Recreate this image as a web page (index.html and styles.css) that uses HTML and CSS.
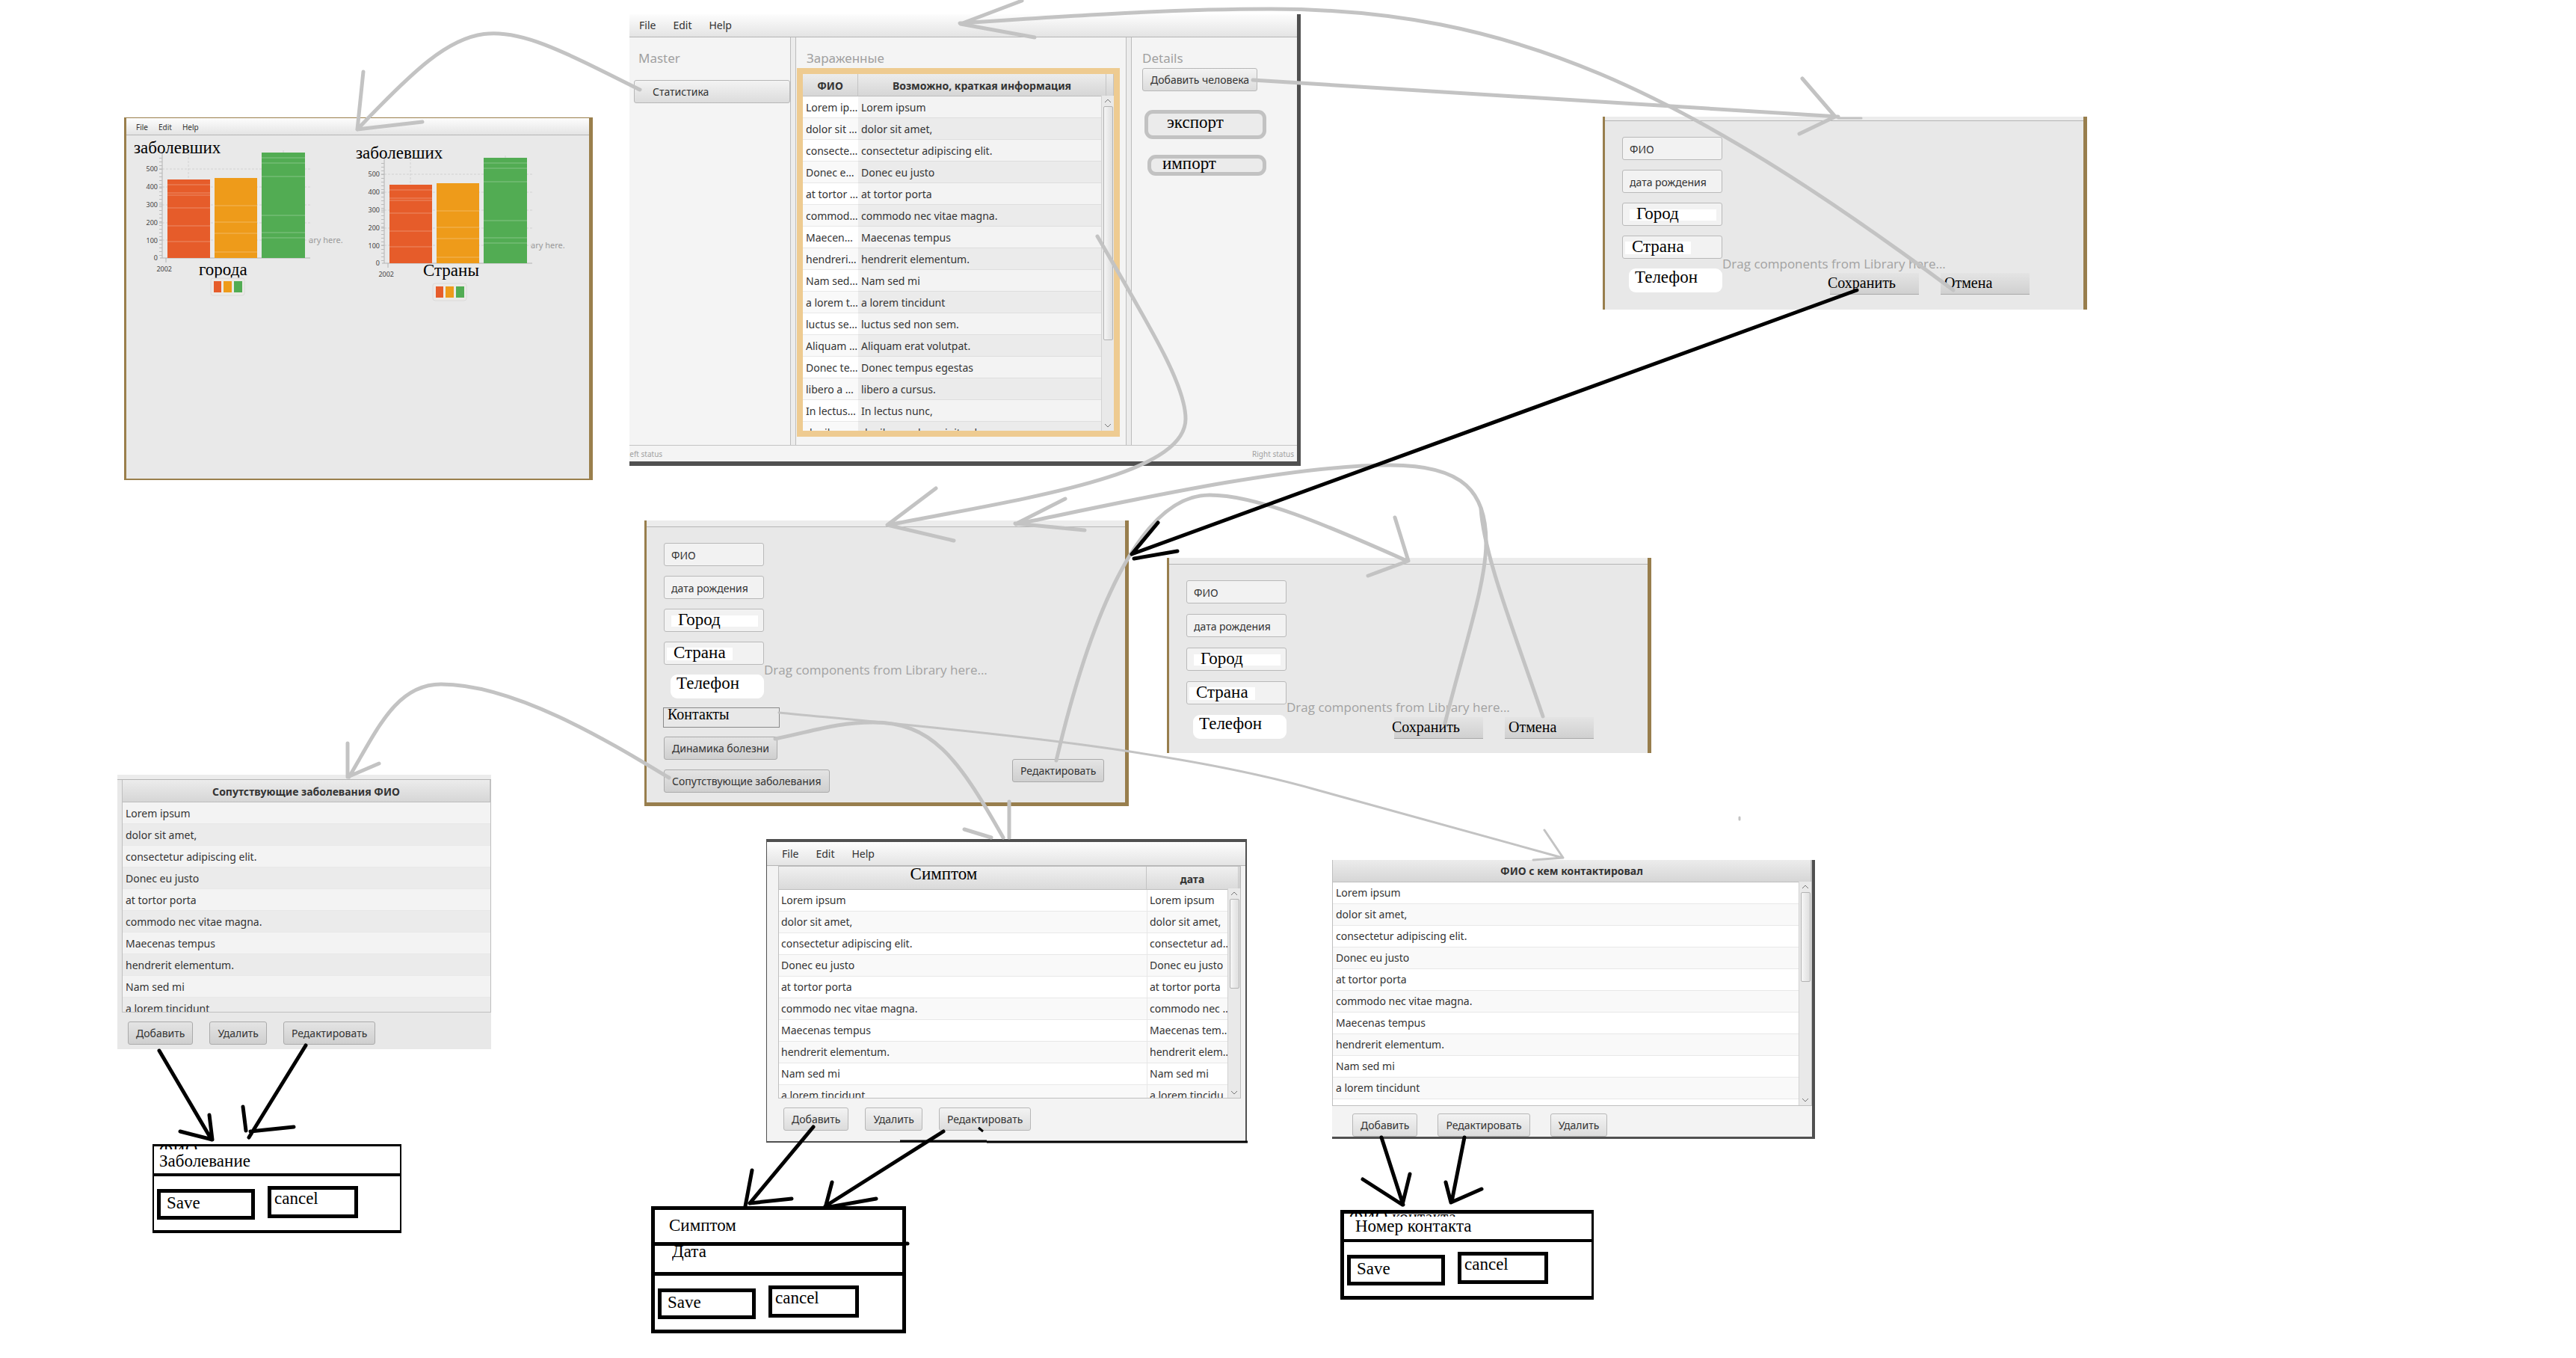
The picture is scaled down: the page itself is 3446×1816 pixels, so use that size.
FILE: index.html
```html
<!DOCTYPE html>
<html lang="ru">
<head>
<meta charset="utf-8">
<title>Схема экранов</title>
<link rel="stylesheet" href="styles.css">
</head>
<body>
<main class="board">

  <section class="window stats" aria-label="Статистика">
    <nav class="menubar small"><button>File</button><button>Edit</button><button>Help</button></nav>
    <div class="charts">
      <svg class="chart" viewBox="0 0 297 220" role="img" aria-label="Заболевшие, города">
        <path class="grid" d="M47 45H245M47 69H245M47 93H245M47 117H245M47 140H245M82 24V164M209 20V164"/>
        <path class="axis" d="M47 24V164M44 164H245M43 45h4M43 69h4M43 93h4M43 117h4M43 140h4M52 164v6"/>
        <path class="ticks" d="M45 30V162"/>
        <g class="tick-labels"><text x="41" y="48">500</text><text x="41" y="72">400</text><text x="41" y="96">300</text><text x="41" y="120">200</text><text x="41" y="144">100</text><text x="41" y="167">0</text><text x="60" y="182">2002</text></g>
        <rect class="red" x="54" y="59" width="57" height="105"/><rect class="amber" x="117" y="57" width="57" height="107"/><rect class="green" x="180" y="23" width="58" height="141"/>
        <path class="streaks" d="M54 66h57M54 77h57M54 80h57M54 97h57M54 121h57M54 142h57M117 94h57M117 116h57M117 131h57M117 156h57M180 30h58M180 37h58M180 55h58M180 107h58M180 130h58M180 137h58"/>
        <text class="hint" x="243" y="144">ary here.</text>
        <text class="note" x="9" y="24">заболевших</text>
        <text class="note" x="96" y="187">города</text>
        <rect class="legend" x="112" y="191" width="45" height="23" rx="3"/><rect class="red" x="116" y="195" width="10" height="15"/><rect class="amber" x="129" y="195" width="11" height="15"/><rect class="green" x="143" y="195" width="11" height="15"/>
      </svg>
      <svg class="chart lower" viewBox="0 0 297 220" role="img" aria-label="Заболевшие, страны">
        <path class="grid" d="M47 45H245M47 69H245M47 93H245M47 117H245M47 140H245M82 24V164M209 20V164"/>
        <path class="axis" d="M47 24V164M44 164H245M43 45h4M43 69h4M43 93h4M43 117h4M43 140h4M52 164v6"/>
        <path class="ticks" d="M45 30V162"/>
        <g class="tick-labels"><text x="41" y="48">500</text><text x="41" y="72">400</text><text x="41" y="96">300</text><text x="41" y="120">200</text><text x="41" y="144">100</text><text x="41" y="167">0</text><text x="60" y="182">2002</text></g>
        <rect class="red" x="54" y="59" width="57" height="105"/><rect class="amber" x="117" y="57" width="57" height="107"/><rect class="green" x="180" y="23" width="58" height="141"/>
        <path class="streaks" d="M54 66h57M54 77h57M54 80h57M54 97h57M54 121h57M54 142h57M117 94h57M117 116h57M117 131h57M117 156h57M180 30h58M180 37h58M180 55h58M180 107h58M180 130h58M180 137h58"/>
        <text class="hint" x="243" y="144">ary here.</text>
        <text class="note" x="9" y="24">заболевших</text>
        <text class="note" x="99" y="181">Страны</text>
        <rect class="legend" x="112" y="191" width="45" height="23" rx="3"/><rect class="red" x="116" y="195" width="10" height="15"/><rect class="amber" x="129" y="195" width="11" height="15"/><rect class="green" x="143" y="195" width="11" height="15"/>
      </svg>
    </div>
  </section>

  <section class="window master" aria-label="Главное окно">
    <nav class="menubar"><button>File</button><button>Edit</button><button>Help</button></nav>
    <div class="panes">
      <div class="pane pane-master">
        <h2>Master</h2>
        <button class="btn wide">Статистика</button>
      </div>
      <div class="splitter"></div>
      <div class="pane pane-list">
        <h2>Зараженные</h2>
        <div class="grid-box selected">
          <table class="people">
            <colgroup><col class="c-name"><col><col class="c-end"></colgroup>
            <thead><tr><th>ФИО</th><th>Возможно, краткая информация</th><th></th></tr></thead>
            <tbody>
              <tr><td>Lorem ipsum</td><td colspan="2">Lorem ipsum</td></tr>
              <tr><td>dolor sit amet,</td><td colspan="2">dolor sit amet,</td></tr>
              <tr><td>consectetur adipiscing elit.</td><td colspan="2">consectetur adipiscing elit.</td></tr>
              <tr><td>Donec eu justo</td><td colspan="2">Donec eu justo</td></tr>
              <tr><td>at tortor porta</td><td colspan="2">at tortor porta</td></tr>
              <tr><td>commodo nec vitae magna.</td><td colspan="2">commodo nec vitae magna.</td></tr>
              <tr><td>Maecenas tempus</td><td colspan="2">Maecenas tempus</td></tr>
              <tr><td>hendrerit elementum.</td><td colspan="2">hendrerit elementum.</td></tr>
              <tr><td>Nam sed mi</td><td colspan="2">Nam sed mi</td></tr>
              <tr><td>a lorem tincidunt</td><td colspan="2">a lorem tincidunt</td></tr>
              <tr><td>luctus sed non sem.</td><td colspan="2">luctus sed non sem.</td></tr>
              <tr><td>Aliquam erat volutpat.</td><td colspan="2">Aliquam erat volutpat.</td></tr>
              <tr><td>Donec tempus egestas</td><td colspan="2">Donec tempus egestas</td></tr>
              <tr><td>libero a cursus.</td><td colspan="2">libero a cursus.</td></tr>
              <tr><td>In lectus nunc,</td><td colspan="2">In lectus nunc,</td></tr>
              <tr><td>dapibus sed suscipit vel</td><td colspan="2">dapibus sed suscipit vel</td></tr>
            </tbody>
          </table>
          <div class="scrollbar"><svg viewBox="0 0 10 6"><path d="M1 5L5 1L9 5"/></svg><i class="thumb t-long"></i><svg class="down" viewBox="0 0 10 6"><path d="M1 1L5 5L9 1"/></svg></div>
        </div>
      </div>
      <div class="splitter"></div>
      <div class="pane pane-details">
        <h2>Details</h2>
        <button class="btn">Добавить человека</button>
        <button class="sketch export">экспорт</button>
        <button class="sketch import">импорт</button>
      </div>
    </div>
    <footer><span class="left-status">Left status</span><span>Right status</span></footer>
  </section>

  <section class="window form add" aria-label="Добавить человека">
    <div class="strip"></div>
    <div class="form-body">
      <div class="fields">
        <input class="field" aria-label="ФИО" value="ФИО">
        <input class="field" aria-label="Дата рождения" value="дата рождения">
        <input class="field note city" aria-label="Город" value="Город">
        <input class="field note country" aria-label="Страна" value="Страна">
        <input class="field note phone" aria-label="Телефон" value="Телефон">
      </div>
      <div class="actions"><button class="flat">Сохранить</button><button class="flat cancel">Отмена</button></div>
    </div>
    <p class="drop-hint">Drag components from Library here...</p>
  </section>

  <section class="window form card" aria-label="Карточка человека">
    <div class="strip"></div>
    <div class="form-body">
      <div class="fields">
        <input class="field" aria-label="ФИО" value="ФИО">
        <input class="field" aria-label="Дата рождения" value="дата рождения">
        <input class="field note city" aria-label="Город" value="Город">
        <input class="field note country" aria-label="Страна" value="Страна">
        <input class="field note phone" aria-label="Телефон" value="Телефон">
        <button class="contacts">Контакты</button>
        <button class="btn dark">Динамика болезни</button>
        <button class="btn dark">Сопутствующие заболевания</button>
      </div>
      <button class="btn dark edit">Редактировать</button>
    </div>
    <p class="drop-hint">Drag components from Library here...</p>
  </section>

  <section class="window form change" aria-label="Редактирование">
    <div class="strip"></div>
    <div class="form-body">
      <div class="fields">
        <input class="field" aria-label="ФИО" value="ФИО">
        <input class="field" aria-label="Дата рождения" value="дата рождения">
        <input class="field note city" aria-label="Город" value="Город">
        <input class="field note country" aria-label="Страна" value="Страна">
        <input class="field note phone" aria-label="Телефон" value="Телефон">
      </div>
      <div class="actions"><button class="flat">Сохранить</button><button class="flat cancel">Отмена</button></div>
    </div>
    <p class="drop-hint">Drag components from Library here...</p>
  </section>

  <section class="window diseases" aria-label="Сопутствующие заболевания">
    <div class="strip"></div>
    <div class="grid-box">
      <table class="grey">
        <thead><tr><th>Сопутствующие заболевания ФИО</th></tr></thead>
        <tbody>
          <tr><td>Lorem ipsum</td></tr><tr><td>dolor sit amet,</td></tr><tr><td>consectetur adipiscing elit.</td></tr><tr><td>Donec eu justo</td></tr><tr><td>at tortor porta</td></tr><tr><td>commodo nec vitae magna.</td></tr><tr><td>Maecenas tempus</td></tr><tr><td>hendrerit elementum.</td></tr><tr><td>Nam sed mi</td></tr><tr><td>a lorem tincidunt</td></tr>
        </tbody>
      </table>
    </div>
    <div class="toolbar"><button class="btn dark">Добавить</button><button class="btn dark">Удалить</button><button class="btn dark">Редактировать</button></div>
  </section>

  <section class="window symptoms" aria-label="Динамика болезни">
    <nav class="menubar"><button>File</button><button>Edit</button><button>Help</button></nav>
    <div class="grid-box">
      <table class="dated">
        <colgroup><col><col class="c-date"><col class="c-edge"></colgroup>
        <thead><tr><th class="note">Симптом</th><th>дата</th><th></th></tr></thead>
        <tbody>
          <tr><td>Lorem ipsum</td><td>Lorem ipsum</td><td></td></tr>
          <tr><td>dolor sit amet,</td><td>dolor sit amet,</td><td></td></tr>
          <tr><td>consectetur adipiscing elit.</td><td>consectetur adipiscing elit.</td><td></td></tr>
          <tr><td>Donec eu justo</td><td>Donec eu justo</td><td></td></tr>
          <tr><td>at tortor porta</td><td>at tortor porta</td><td></td></tr>
          <tr><td>commodo nec vitae magna.</td><td>commodo nec vitae magna.</td><td></td></tr>
          <tr><td>Maecenas tempus</td><td>Maecenas tempus</td><td></td></tr>
          <tr><td>hendrerit elementum.</td><td>hendrerit elementum.</td><td></td></tr>
          <tr><td>Nam sed mi</td><td>Nam sed mi</td><td></td></tr>
          <tr><td>a lorem tincidunt</td><td>a lorem tincidunt</td><td></td></tr>
        </tbody>
      </table>
      <div class="scrollbar"><svg viewBox="0 0 10 6"><path d="M1 5L5 1L9 5"/></svg><i class="thumb"></i><svg class="down" viewBox="0 0 10 6"><path d="M1 1L5 5L9 1"/></svg></div>
    </div>
    <div class="toolbar"><button class="btn">Добавить</button><button class="btn">Удалить</button><button class="btn">Редактировать</button></div>
  </section>

  <section class="window people-met" aria-label="Контакты">
    <div class="grid-box">
      <table>
        <thead><tr><th>ФИО с кем контактировал</th></tr></thead>
        <tbody>
          <tr><td>Lorem ipsum</td></tr><tr><td>dolor sit amet,</td></tr><tr><td>consectetur adipiscing elit.</td></tr><tr><td>Donec eu justo</td></tr><tr><td>at tortor porta</td></tr><tr><td>commodo nec vitae magna.</td></tr><tr><td>Maecenas tempus</td></tr><tr><td>hendrerit elementum.</td></tr><tr><td>Nam sed mi</td></tr><tr><td>a lorem tincidunt</td></tr>
        </tbody>
      </table>
      <div class="scrollbar"><svg viewBox="0 0 10 6"><path d="M1 5L5 1L9 5"/></svg><i class="thumb"></i><svg class="down" viewBox="0 0 10 6"><path d="M1 1L5 5L9 1"/></svg></div>
    </div>
    <div class="toolbar"><button class="btn">Добавить</button><button class="btn">Редактировать</button><button class="btn">Удалить</button></div>
  </section>

  <form class="dialog disease-dialog">
    <span class="ghost">ФИО</span>
    <input class="line" aria-label="Заболевание" value="Заболевание">
    <div class="choices"><button type="button" class="save">Save</button><button type="button" class="dismiss">cancel</button></div>
  </form>

  <form class="dialog symptom-dialog">
    <input class="line" aria-label="Симптом" value="Симптом">
    <input class="line date" aria-label="Дата" value="Дата">
    <div class="choices"><button type="button" class="save">Save</button><button type="button" class="dismiss">cancel</button></div>
  </form>

  <form class="dialog contact-dialog">
    <span class="ghost">ФИО контакта</span>
    <input class="line" aria-label="Номер контакта" value="Номер контакта">
    <div class="choices"><button type="button" class="save">Save</button><button type="button" class="dismiss">cancel</button></div>
  </form>

  <svg class="arrows" aria-hidden="true">
    <g class="grey-ink">
      <path d="M856 120C651 17 637 6 478 173M486 96L478 173L565 163"/>
      <path d="M2613 388C2250 118 2020 12 1700 12C1560 12 1420 22 1284 31M1367 1L1285 32L1384 50"/>
      <path d="M1676 107L2459 156M2411 105L2455 156L2407 179"/>
      <path class="thin" d="M2459 158H2490"/>
      <path d="M1468 316C1540 440 1586 515 1586 560C1586 635 1380 665 1188 702M1252 653L1187 702L1276 723"/>
      <path d="M1359 701C1500 672 1720 622 1860 622C1960 622 1988 660 1988 725C1988 780 1960 860 1933 967M1425 667L1362 699M1358 700L1451 709"/>
      <path d="M1981 680C1985 740 2020 830 2064 958"/>
      <path d="M1413 1017C1450 860 1515 662 1618 662C1680 662 1770 700 1882 750M1866 692L1884 750L1830 770"/>
      <path d="M1037 988C1090 977 1120 966 1168 966C1245 966 1280 1010 1342 1120M1350 1072V1120M1290 1109L1326 1120"/>
      <path d="M895 1040C820 995 690 915 590 915C530 915 505 975 467 1039M465 994V1039L507 1021"/>
      <path class="thin" d="M1042 953C1250 973 1560 998 1764 1057L2090 1147M2066 1110L2091 1147L2051 1150"/>
      <path class="thin" d="M2327 1093v3"/>
    </g>
    <g class="black-ink">
      <path d="M2484 388L1514 741M1549 699L1514 741M1517 747L1575 737"/>
      <path d="M213 1405L283 1524M280 1491L284 1524L241 1513M409 1398L333 1521M325 1480L329 1512M335 1513L393 1507"/>
      <path d="M1088 1507L1003 1609M1006 1565L997 1613M1003 1609L1059 1603M1262 1513L1104 1613M1113 1581L1104 1615L1172 1603"/>
      <path d="M1848 1521L1877 1611M1823 1577L1876 1611L1886 1570M1959 1521L1942 1607M1934 1581L1941 1608L1982 1590"/>
      <path class="mid" d="M1204 1526H1320M1320 1527H1669M1309 1508l6 5"/>
      <path d="M1210 1663h4"/>
    </g>
  </svg>
</main>
</body>
</html>
```
FILE: styles.css
```css
* { box-sizing: border-box; }
body { margin: 0; background: #fff; color: #333; font: 14px/20px "Noto Sans", "Open Sans", sans-serif; }
button, input { font: inherit; color: inherit; margin: 0; border-radius: 0; }
h2, p { margin: 0; font-weight: 400; }

.board { position: relative; min-height: 100vh; overflow: hidden; }
.window, .dialog { position: absolute; display: flex; flex-direction: column; }
.arrows { position: absolute; inset: 0; width: 100%; height: 100%; fill: none; pointer-events: none; }
.grey-ink { stroke: #c3c3c3; stroke-width: 5px; stroke-linecap: round; stroke-linejoin: round; }
.grey-ink .thin { stroke-width: 3px; }
.black-ink { stroke: #000; stroke-width: 5px; stroke-linecap: round; stroke-linejoin: round; }
.black-ink .mid { stroke-width: 3px; stroke-linecap: butt; }
.note { font-family: "Liberation Serif", serif; font-size: 23px; font-weight: 400; color: #000; fill: #000; }

/* shared parts */
.menubar { display: flex; align-items: center; gap: 23px; height: 31px; flex: none; border-bottom: 1px solid #b5b5b5; background: linear-gradient(#fdfdfd, #e4e4e4); }
.menubar button { padding: 0; border: 0; background: none; }
.strip { height: 9px; flex: none; border-bottom: 1px solid #b5b5b5; background: #ececec; }
.btn { height: 31px; padding: 0 10px; border: 1px solid #b7b7b7; border-radius: 3px; background: linear-gradient(#f3f3f3, #dcdcdc); white-space: nowrap; }
.btn.dark { border-color: #aaa; background: linear-gradient(#e4e4e4, #cfcfcf); }
.toolbar { display: flex; }
.grid-box { position: relative; overflow: hidden; border: 1px solid #bfbfbf; background: #fff; }
table { width: 100%; table-layout: fixed; border-collapse: separate; border-spacing: 0; }
th { height: 30px; padding: 2px 0 0; border-bottom: 1px solid #bdbdbd; border-right: 1px solid #c4c4c4; background: linear-gradient(#ececec, #d6d6d6); line-height: 20px; }
td { height: 29px; padding: 2px 0 0 4px; border-bottom: 1px solid #e8e8e8; line-height: 20px; white-space: nowrap; overflow: hidden; text-overflow: ellipsis; }
tbody tr:nth-child(even) { background: #f9f9f9; }
.grey tbody tr, .people td:last-child { background: #f3f3f3; border-color: #dedede; }
.grey tbody tr:nth-child(even), .people tr:nth-child(even) td:last-child { background: #ebebeb; }
.scrollbar { position: absolute; top: 29px; right: 0; bottom: 0; display: flex; flex-direction: column; align-items: center; width: 17px; padding: 4px 0; border-left: 1px solid #d2d2d2; background: #e9e9e9; }
.scrollbar svg { width: 10px; height: 6px; fill: none; stroke: #777; }
.scrollbar .down { margin-top: auto; }
.thumb { width: 13px; height: 120px; margin-top: 4px; border: 1px solid #b3b3b3; border-radius: 2px; background: linear-gradient(90deg, #f6f6f6, #dedede); }
.thumb.t-long { height: 313px; }

/* statistics */
.stats { left: 166px; top: 157px; width: 627px; height: 485px; border: solid #9a7f4c; border-width: 1px 5px 2px 3px; background: #e9e9e9; }
.menubar.small { gap: 14px; height: 23px; padding: 1px 0 0 13px; font-size: 10px; }
.charts { display: flex; padding-left: 1px; }
.chart { width: 297px; height: 220px; overflow: visible; flex: none; }
.chart.lower { margin-top: 7px; }
.chart .grid { stroke: #d2d2d2; stroke-dasharray: 3 2; fill: none; }
.chart .axis { stroke: #b2b2b2; fill: none; }
.chart .ticks { stroke: #bbb; stroke-width: 4px; stroke-dasharray: 1 4; fill: none; }
.tick-labels { font-size: 9px; fill: #444; text-anchor: end; }
.red { fill: #e65c2a; }
.amber { fill: #ee9b1a; }
.green { fill: #52ac53; }
.streaks { stroke: #fff; stroke-opacity: 0.3; }
.hint { font-size: 11px; fill: #999; }
.legend { fill: #ebe9e6; stroke: #dadada; }

/* main window */
.master { left: 842px; top: 19px; width: 898px; height: 604px; border: solid #505050; border-width: 0 5px 6px 0; background: #f4f4f4; }
.master .menubar { padding-left: 13px; }
.panes { display: grid; grid-template-columns: 215px 8px 441px 8px 1fr; flex: 1; }
.pane { display: flex; flex-direction: column; align-items: flex-start; }
.pane h2 { height: 41px; padding: 16px 14px 0; font-size: 17px; line-height: 24px; color: #a0a0a0; }
.splitter { border: solid #bdbdbd; border-width: 0 1px; background: #ececec; }
.pane-master h2 { padding-left: 12px; }
.btn.wide { align-self: stretch; margin: 16px 0 0 6px; padding-left: 24px; text-align: left; }
.selected { align-self: stretch; height: 493px; margin: 0 8px 0 1px; border: 8px solid #eecb91; }
.people .c-name { width: 74px; }
.people .c-end { width: 10px; }
.pane-details .btn { margin-left: 14px; }
.sketch { border: 5px solid #c2c2c2; border-radius: 11px; background: #ebebeb; font: 23px/24px "Liberation Serif", serif; color: #000; text-align: left; }
.export { width: 163px; height: 39px; margin: 25px 0 0 17px; padding: 0 0 5px 25px; }
.import { width: 159px; height: 28px; margin: 21px 0 0 21px; padding: 0 0 5px 15px; line-height: 13px; }
.master footer { display: flex; justify-content: space-between; height: 22px; padding-right: 4px; border-top: 1px solid #c4c4c4; font-size: 10px; line-height: 22px; color: #a0a0a0; }
.left-status { text-indent: -5px; overflow: hidden; }

/* person forms */
.form { border: solid #987e4d; border-width: 0 5px 0 3px; background: #e8e8e8; }
.form-body { display: flex; flex: 1; padding: 21px 0 20px 23px; }
.fields { display: flex; flex-direction: column; align-items: flex-start; gap: 13px; width: 255px; flex: none; }
.field { width: 134px; height: 31px; padding: 2px 9px 0; border: 1px solid #b9b9b9; border-radius: 3px; background: #f2f2f2; }
.field.city { padding: 0 0 2px 18px; background: linear-gradient(#fff, #fff) 9px 8px / 116px 15px no-repeat #f2f2f2; }
.field.country { padding: 0 0 2px 12px; background: linear-gradient(#fff, #fff) 3px 7px / 88px 17px no-repeat #f2f2f2; }
.field.phone { width: 125px; height: 32px; margin-left: 9px; padding: 0 0 8px 8px; border: 0; border-radius: 9px; background: #fff; }
.actions { display: flex; align-items: flex-end; gap: 29px; margin-left: 23px; }
.flat { width: 119px; height: 29px; padding: 0 0 3px; border: 0; border-bottom: 1px solid #a9a9a9; background: linear-gradient(#e4e4e4, #d0d0d0); font: 20px/24px "Liberation Serif", serif; color: #000; text-align: left; text-indent: -3px; }
.flat.cancel { padding-left: 8px; }
.drop-hint { position: absolute; top: 188px; left: 157px; font-family: "Open Sans", sans-serif; font-size: 17px; line-height: 24px; color: #a2a2a2; }
.add { left: 2144px; top: 156px; width: 648px; height: 258px; }
.add .strip { height: 6px; }
.add .drop-hint { top: 185px; }
.card { left: 862px; top: 696px; width: 648px; height: 382px; border-bottom-width: 5px; }
.card .form-body { padding-bottom: 13px; }
.change { left: 1561px; top: 746px; width: 648px; height: 261px; }
.change .fields { gap: 14px; }
.contacts { width: 156px; height: 27px; margin: -1px 0 -1px -1px; padding: 0 0 10px 5px; border: 1px solid #8a8a8a; background: none; font: 20px/16px "Liberation Serif", serif; color: #000; text-align: left; }
.edit { align-self: flex-end; margin: 0 0 14px 211px; }

/* list windows */
.diseases { left: 157px; top: 1036px; width: 500px; height: 367px; background: #e8e8e8; }
.diseases .strip { height: 7px; }
.diseases .grid-box { height: 311px; margin-left: 6px; border-top: 0; }
.diseases .toolbar { gap: 22px; padding: 12px 14px 0; }
.symptoms { left: 1025px; top: 1122px; width: 643px; height: 406px; border: solid #505050; border-width: 4px 2px 2px 1px; background: #f3f3f3; }
.symptoms .menubar { padding-left: 20px; height: 32px; }
.symptoms .grid-box { height: 311px; margin: 0 6px 0 15px; }
.dated .c-date { width: 123px; }
.dated .c-edge { width: 2px; }
.dated td { padding: 0 0 0 3px; }
.dated td:nth-child(2) { padding-right: 8px; border-left: 1px solid #e8e8e8; }
.dated th { background: linear-gradient(#f0f0f0, #dadada); padding-top: 4px; }
.dated th.note { padding: 0 50px 10px 0; }
.symptoms .toolbar { gap: 22px; padding: 12px 22px 0; }
.people-met { left: 1782px; top: 1150px; width: 646px; height: 373px; border: solid #505050; border-width: 0 4px 3px 0; background: #f3f3f3; }
.people-met .grid-box { height: 329px; border-top: 0; }
.people-met td, .people-met th { padding-top: 0; }
.people-met .toolbar { gap: 27px; padding: 10px 27px 0; }

/* hand-drawn dialogs */
.dialog { border: 5px solid #000; background: #fff; font: 23px/26px "Liberation Serif", serif; color: #000; }
.line { width: 100%; border: 0; border-bottom: 4px solid #000; background: none; padding: 0 0 2px; }
.choices { display: flex; align-items: flex-start; gap: 17px; height: 72px; padding: 13px 4px 0; }
.choices button { border: 5px solid #000; background: #fff; text-align: left; line-height: 24px; }
.save { width: 131px; height: 41px; margin-top: 4px; padding: 0 8px 3px; }
.dismiss { width: 121px; height: 43px; padding: 0 4px 11px; }
.ghost { position: absolute; top: 0; left: 7px; height: 4px; overflow: hidden; line-height: 9px; }
.disease-dialog { left: 204px; top: 1530px; width: 333px; border-width: 3px 2px 4px; }
.disease-dialog .line { height: 40px; padding: 3px 0 0 7px; }
.symptom-dialog { left: 871px; top: 1613px; width: 341px; }
.symptom-dialog .line { height: 48px; padding-left: 19px; border-width: 0 0 5px; }
.symptom-dialog .line.date { height: 40px; padding: 0 0 20px 23px; }
.contact-dialog { left: 1793px; top: 1618px; width: 339px; border-right-width: 3px; }
.contact-dialog .line { height: 38px; padding: 0 0 1px 15px; }
```
